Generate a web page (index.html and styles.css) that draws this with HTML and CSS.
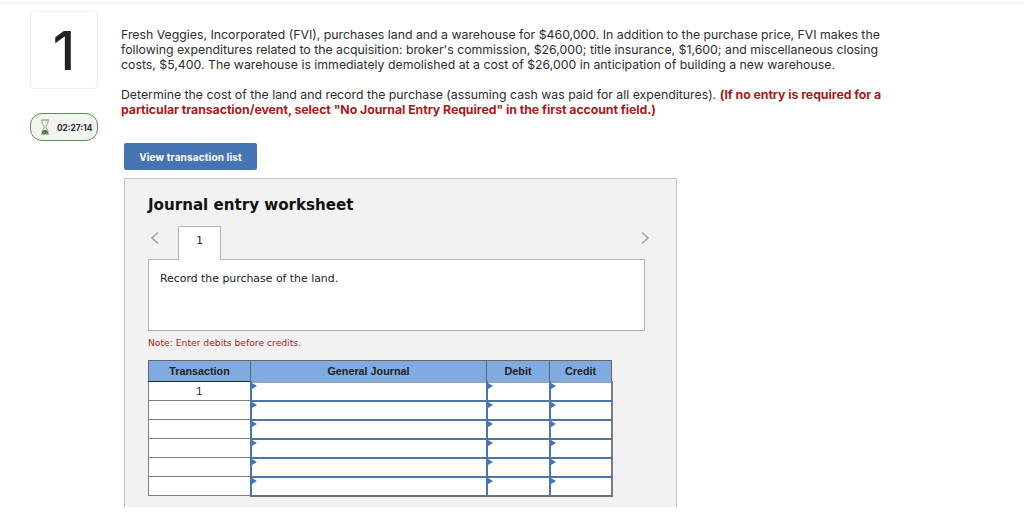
FILE: index.html
```html
<!DOCTYPE html>
<html lang="en">
<head>
<meta charset="utf-8">
<title>Journal entry worksheet</title>
<link rel="stylesheet" href="styles.css">
</head>
<body>
<main class="page">
  <aside class="side">
    <div class="qnum">1</div>
    <div class="timer">
      <svg class="hourglass" width="10" height="16" viewBox="0 0 10 16" aria-hidden="true">
        <path d="M1.500 1h7M1.500 15h7" stroke="#5d8a52" stroke-width="1.100" fill="none" stroke-linecap="round"/>
        <path d="M2 1.500V3.500C2 5.500 4.200 6.500 4.200 8S2 10.500 2 12.500v2M8 1.500V3.500C8 5.500 5.800 6.500 5.800 8S8 10.500 8 12.500v2" stroke="#7fa276" stroke-width=".9" fill="none"/>
        <path d="M2 14.800v-2C2.600 11.700 4 10.800 5 10.800s2.400.9 3 2v2z" fill="#4f7d45"/>
      </svg>
      <span class="time">02:27:14</span>
    </div>
  </aside>
  <section class="content">
    <p class="para">Fresh Veggies, Incorporated (FVI), purchases land and a warehouse for $460,000. In addition to the purchase price, FVI makes the<br>following expenditures related to the acquisition: broker's commission, $26,000; title insurance, $1,600; and miscellaneous closing<br>costs, $5,400. The warehouse is immediately demolished at a cost of $26,000 in anticipation of building a new warehouse.</p>
    <p class="para second">Determine the cost of the land and record the purchase (assuming cash was paid for all expenditures). <strong class="warn">(If no entry is required for a<br>particular transaction/event, select "No Journal Entry Required" in the first account field.)</strong></p>
    <button class="view-btn" type="button">View transaction list</button>
    <div class="panel">
      <h2 class="panel-title">Journal entry worksheet</h2>
      <div class="tabs">
        <svg class="chev" width="10" height="14" viewBox="0 0 10 14" aria-hidden="true"><path d="M8 1.500 2 7l6 5.500" fill="none" stroke="#a3a3a3" stroke-width="1.600"/></svg>
        <div class="tab">1</div>
        <svg class="chev next" width="10" height="14" viewBox="0 0 10 14" aria-hidden="true"><path d="M2 1.500 8 7l-6 5.500" fill="none" stroke="#a3a3a3" stroke-width="1.600"/></svg>
      </div>
      <div class="record">Record the purchase of the land.</div>
      <p class="note">Note: Enter debits before credits.</p>
      <table class="journal">
        <thead>
          <tr><th class="c1">Transaction</th><th class="c2">General Journal</th><th class="c3">Debit</th><th class="c4">Credit</th></tr>
        </thead>
        <tbody>
          <tr><td class="tx">1</td><td class="in"></td><td class="in"></td><td class="in"></td></tr>
          <tr><td class="tx"></td><td class="in"></td><td class="in"></td><td class="in"></td></tr>
          <tr><td class="tx"></td><td class="in"></td><td class="in"></td><td class="in"></td></tr>
          <tr><td class="tx"></td><td class="in"></td><td class="in"></td><td class="in"></td></tr>
          <tr><td class="tx"></td><td class="in"></td><td class="in"></td><td class="in"></td></tr>
          <tr><td class="tx"></td><td class="in"></td><td class="in"></td><td class="in"></td></tr>
        </tbody>
      </table>
    </div>
  </section>
</main>
</body>
</html>
```
FILE: styles.css
```css
* { box-sizing: border-box; }
html, body { margin: 0; height: 516px; overflow: hidden; background: #fff; }
.page {
  display: flex;
  height: 514px;
  margin-top: 2px;
  border-top: 1px solid #eeeeee;
  padding: 8px 0 0 30px;
  font-family: "Inter", "Liberation Sans", sans-serif;
  color: #2e2e2e;
}
.side { width: 68px; flex: none; display: flex; flex-direction: column; gap: 24px; }
.qnum {
  height: 78px;
  border: 1px solid #efefef;
  border-radius: 5px;
  display: flex;
  align-items: center;
  justify-content: center;
  font-size: 54px;
  font-weight: 500;
  color: #222;
}
.timer {
  height: 28px;
  border: 1px solid #5d8a52;
  border-radius: 12px;
  background: #f3f6f0;
  display: flex;
  align-items: center;
  gap: 7px;
  padding-left: 9px;
}
.time { font-size: 8.300px; font-weight: 700; color: #2b2b2b; margin-top: 2px; }
.content { margin-left: 23px; padding-top: 16px; width: 800px; }
.para { margin: 0; font-size: 12.300px; line-height: 15px; white-space: nowrap; }
.second { margin-top: 15px; }
.warn { color: #a61c1c; font-weight: 700; letter-spacing: -0.05px; }
.view-btn {
  display: block;
  margin: 26px 0 8px 3px;
  width: 133px;
  height: 27px;
  background: #4674b2;
  border: 0;
  border-radius: 2px;
  color: #fff;
  white-space: nowrap;
  letter-spacing: 0.15px;
  font: 700 10px "Inter", sans-serif;
}
.panel {
  margin-left: 3px;
  width: 553px;
  height: 329px;
  background: #f2f2f2;
  border: 1px solid #c8c8c8;
  border-bottom: 0;
  padding: 16px 23px 0;
  font-family: "DejaVu Sans", sans-serif;
}
.panel-title { margin: 0; font-size: 15.100px; line-height: 20px; font-weight: 700; color: #111; }
.tabs { display: flex; align-items: center; margin-top: 11px; height: 34px; position: relative; margin-bottom: -1px; width: 497px; }
.chev { margin-left: 2px; margin-bottom: 10px; }
.next { margin-left: auto; margin-right: -5px; }
.tab {
  margin-left: 18px;
  width: 43px;
  height: 34px;
  background: #fff;
  border: 1px solid #b5b5b5;
  border-bottom: 0;
  text-align: center;
  font-size: 10.500px;
  line-height: 26px;
  color: #222;
  position: relative;
  z-index: 1;
}
.record {
  width: 497px;
  height: 72px;
  background: #fff;
  border: 1px solid #b5b5b5;
  padding: 11px 11px;
  font-size: 10.900px;
  line-height: 15px;
  color: #222;
}
.note { margin: 6px 0 0; font-size: 9.200px; line-height: 12px; color: #a61c1c; }
.journal { margin-top: 11px; border-collapse: collapse; table-layout: fixed; width: 463px; font-family: "Liberation Sans", sans-serif; font-size: 10.800px; }
.journal th { height: 21px; background: #7fabe0; border: 1px solid #666; border-bottom: 1px solid #222; font-weight: 700; color: #222; padding: 0; }
.c1 { width: 102px; }
.c2 { width: 236px; }
.c3 { width: 63px; }
.c4 { width: 62px; }
.journal td { height: 19px; background: #fff; padding: 0; }
.tx { border: 1px solid #7f7f7f; text-align: center; color: #222; vertical-align: middle; }
.in {
  position: relative;
  border: 2px solid #4f75a8;
}
.in:last-child { border-right-color: #777c84; }
tr:last-child .in { border-bottom-color: #667387; }
tr:first-child .in { border-top-color: #8ba6cc; }
.in::before {
  content: "";
  position: absolute;
  left: 0;
  top: 0;
  border-left: 5px solid #4674b2;
  border-top: 3px solid transparent;
  border-bottom: 3px solid transparent;
}
```
